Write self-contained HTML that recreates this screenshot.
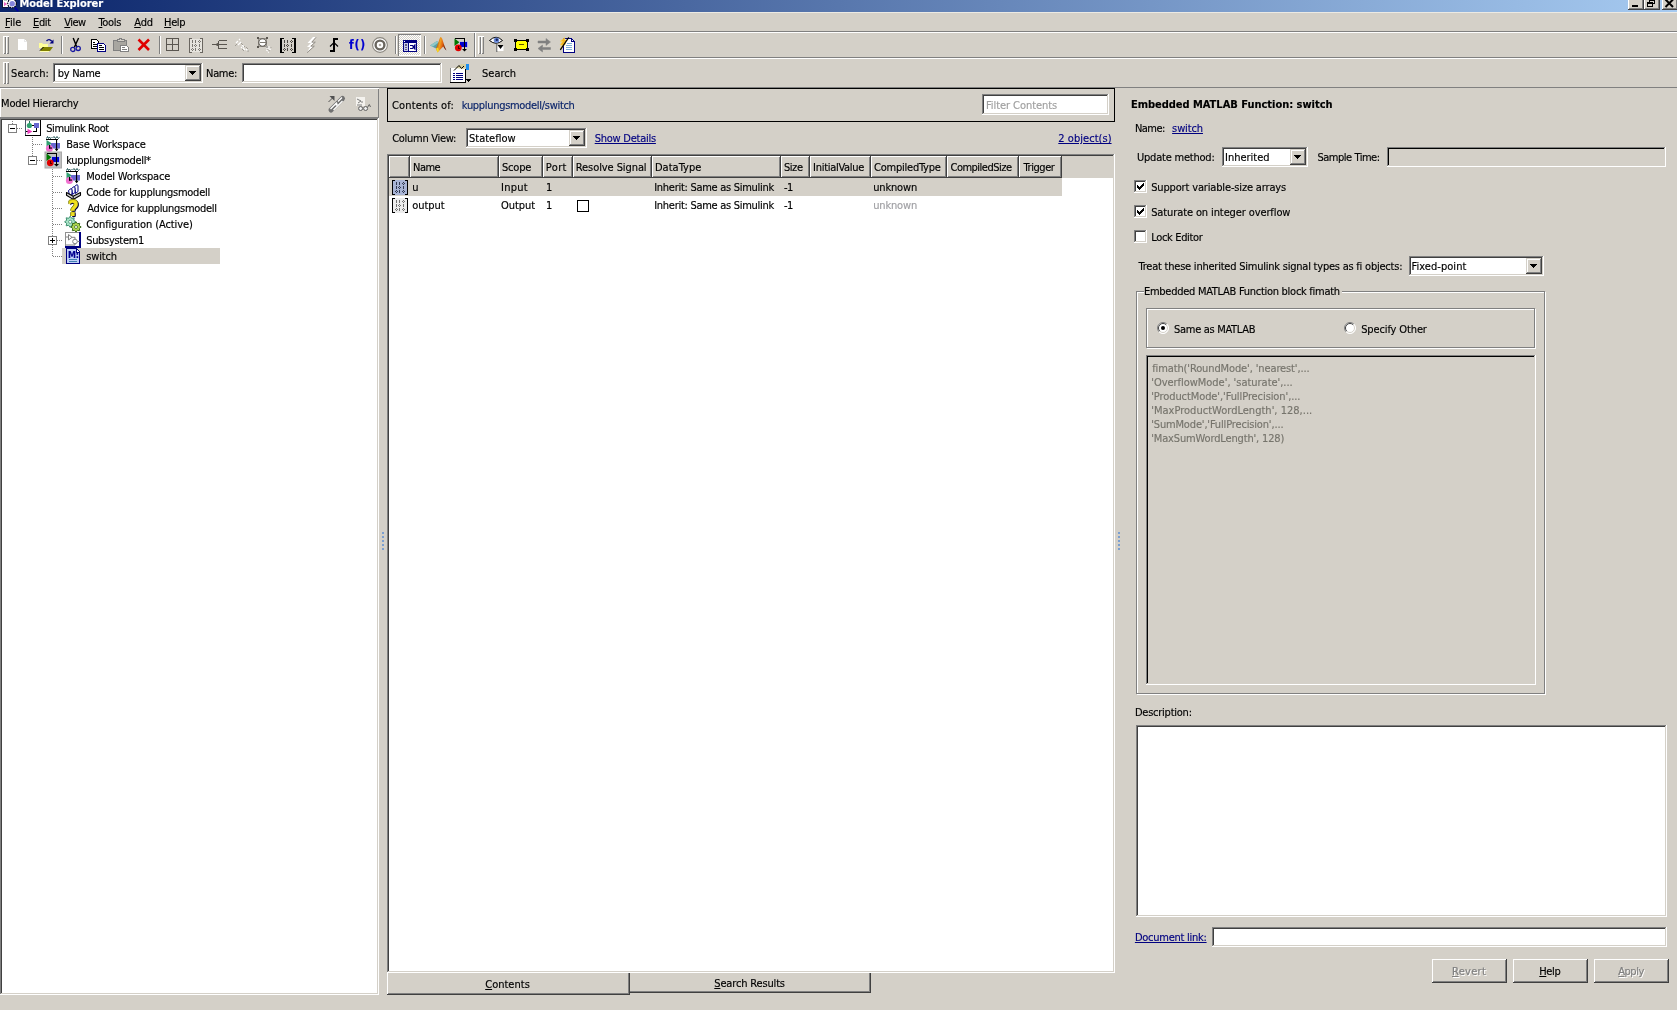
<!DOCTYPE html>
<html><head><meta charset="utf-8"><title>Model Explorer</title><style>
html,body{margin:0;padding:0}
body{width:1677px;height:1010px;overflow:hidden;background:#d4d0c8;position:relative;font:11px/14px "DejaVu Sans Condensed","Liberation Sans",sans-serif;color:#000}
div,span.t,svg{position:absolute;box-sizing:border-box}
.t{white-space:pre;line-height:14px;height:14px;-webkit-text-stroke:0.15px}
u{text-decoration:underline;text-underline-offset:1px;text-decoration-thickness:1px}
.sk{box-shadow:inset -1px -1px 0 #fff,inset 1px 1px 0 #808080,inset -2px -2px 0 #d4d0c8,inset 2px 2px 0 #404040}
.rb{background:#d4d0c8;box-shadow:inset -1px -1px 0 #404040,inset 1px 1px 0 #fff,inset -2px -2px 0 #808080,inset 2px 2px 0 #d4d0c8}
.rs{background:#d4d0c8;box-shadow:inset -1px -1px 0 #404040,inset 1px 1px 0 #d4d0c8,inset -2px -2px 0 #808080,inset 2px 2px 0 #fff}
.skd{box-shadow:inset -1px -1px 0 #fff,inset 1px 1px 0 #808080,inset -2px -2px 0 #d4d0c8,inset 2px 2px 0 #000}
.hc{background:#d4d0c8;box-shadow:inset -1px -1px 0 #404040,inset 1px 1px 0 #fff,inset -2px -2px 0 #808080}
svg{overflow:visible}
#w{left:0;top:0;width:1677px;height:1010px;overflow:hidden;will-change:transform}
</style></head><body><div id="w">
<div style="left:0px;top:0px;width:1677px;height:12px;background:linear-gradient(90deg,#0a246a 0%,#a6caf0 100%)"></div>
<div class="rb" style="left:1628px;top:-4px;width:16px;height:14px;"></div>
<div class="rb" style="left:1644px;top:-4px;width:16px;height:14px;"></div>
<div class="rb" style="left:1662px;top:-4px;width:16px;height:14px;"></div>
<div style="left:1632px;top:5px;width:6px;height:2px;background:#000"></div>
<div style="left:1649px;top:-1px;width:6px;height:5px;border:1px solid #000;border-top-width:2px"></div>
<div style="left:1647px;top:2px;width:6px;height:5px;border:1px solid #000;border-top-width:2px;background:#d4d0c8"></div>
<svg style="left:1665px;top:-1.5px" width="9" height="9" viewBox="0 0 9 9"><path d="M0.5 0.5L8 8M8 0.5L0.5 8" stroke="#000" stroke-width="2"/></svg>
<div style="left:0px;top:12px;width:1677px;height:1px;background:#eceae4"></div>
<div style="left:0px;top:31px;width:1677px;height:1px;background:#808080"></div>
<div style="left:0px;top:32px;width:1677px;height:1px;background:#ffffff"></div>
<div style="left:3px;top:36px;width:3px;height:18px;background:#d4d0c8;box-shadow:inset 1px 1px 0 #fff,inset -1px -1px 0 #808080"></div>
<div style="left:6px;top:36px;width:3px;height:18px;background:#d4d0c8;box-shadow:inset 1px 1px 0 #fff,inset -1px -1px 0 #808080"></div>
<div style="left:61px;top:36px;width:1px;height:18px;background:#808080"></div>
<div style="left:62px;top:36px;width:1px;height:18px;background:#ffffff"></div>
<div style="left:159px;top:36px;width:1px;height:18px;background:#808080"></div>
<div style="left:160px;top:36px;width:1px;height:18px;background:#ffffff"></div>
<div style="left:395px;top:36px;width:1px;height:18px;background:#808080"></div>
<div style="left:396px;top:36px;width:1px;height:18px;background:#ffffff"></div>
<div style="left:424px;top:36px;width:1px;height:18px;background:#808080"></div>
<div style="left:425px;top:36px;width:1px;height:18px;background:#ffffff"></div>
<div style="left:474px;top:33px;width:1px;height:24px;background:#808080"></div>
<div style="left:475px;top:33px;width:1px;height:24px;background:#ffffff"></div>
<div style="left:478px;top:36px;width:3px;height:18px;background:#d4d0c8;box-shadow:inset 1px 1px 0 #fff,inset -1px -1px 0 #808080"></div>
<div style="left:481px;top:36px;width:3px;height:18px;background:#d4d0c8;box-shadow:inset 1px 1px 0 #fff,inset -1px -1px 0 #808080"></div>
<div style="left:0px;top:57px;width:1677px;height:1px;background:#808080"></div>
<div style="left:0px;top:58px;width:1677px;height:1px;background:#ffffff"></div>
<div style="left:398px;top:34px;width:23px;height:22px;background-image:conic-gradient(#fff 25%,#d4d0c8 0 50%,#fff 0 75%,#d4d0c8 0);background-size:2px 2px;box-shadow:inset 1px 1px 0 #808080,inset -1px -1px 0 #fff"></div>
<div style="left:3px;top:62px;width:3px;height:22px;background:#d4d0c8;box-shadow:inset 1px 1px 0 #fff,inset -1px -1px 0 #808080"></div>
<div style="left:6px;top:62px;width:3px;height:22px;background:#d4d0c8;box-shadow:inset 1px 1px 0 #fff,inset -1px -1px 0 #808080"></div>
<div class="sk" style="left:53px;top:63px;width:150px;height:20px;background:#fff"></div>
<div class="rs" style="left:185px;top:65px;width:16px;height:16px;"></div>
<div class="sk" style="left:242px;top:63px;width:200px;height:20px;background:#fff"></div>
<div style="left:0px;top:87px;width:1677px;height:1px;background:#808080"></div>
<svg style="left:189px;top:71px" width="7" height="4" viewBox="0 0 7 4" shape-rendering="crispEdges"><path d="M0 0H7L3.5 3.5Z M0 0h7v1h-7z M1 1h5v1h-5z M2 2h3v1h-3z M3 3h1v1h-1z" fill="#000"/></svg>
<div style="left:0px;top:88px;width:379px;height:1px;background:#ffffff"></div>
<div style="left:0px;top:88px;width:1px;height:30px;background:#ffffff"></div>
<div style="left:378px;top:89px;width:1px;height:29px;background:#808080"></div>
<div style="left:0px;top:117px;width:379px;height:1px;background:#808080"></div>
<div class="sk" style="left:0px;top:118px;width:379px;height:877px;background:#fff"></div>
<div style="left:382px;top:532px;width:2px;height:2px;background:#7b9fd0"></div>
<div style="left:382px;top:536px;width:2px;height:2px;background:#7b9fd0"></div>
<div style="left:382px;top:540px;width:2px;height:2px;background:#7b9fd0"></div>
<div style="left:382px;top:544px;width:2px;height:2px;background:#7b9fd0"></div>
<div style="left:382px;top:548px;width:2px;height:2px;background:#7b9fd0"></div>
<div style="left:1118px;top:532px;width:2px;height:2px;background:#7b9fd0"></div>
<div style="left:1118px;top:536px;width:2px;height:2px;background:#7b9fd0"></div>
<div style="left:1118px;top:540px;width:2px;height:2px;background:#7b9fd0"></div>
<div style="left:1118px;top:544px;width:2px;height:2px;background:#7b9fd0"></div>
<div style="left:1118px;top:548px;width:2px;height:2px;background:#7b9fd0"></div>
<div style="left:387px;top:88px;width:728px;height:34px;border:1px solid #000"></div>
<div class="sk" style="left:982px;top:94px;width:127px;height:21px;background:#fff"></div>
<div class="sk" style="left:466px;top:128px;width:121px;height:20px;background:#fff"></div>
<div class="rs" style="left:569px;top:130px;width:16px;height:16px;"></div>
<svg style="left:573px;top:136px" width="7" height="4" viewBox="0 0 7 4" shape-rendering="crispEdges"><path d="M0 0H7L3.5 3.5Z M0 0h7v1h-7z M1 1h5v1h-5z M2 2h3v1h-3z M3 3h1v1h-1z" fill="#000"/></svg>
<div class="sk" style="left:387px;top:154px;width:728px;height:819px;background:#fff"></div>
<div class="hc" style="left:389px;top:156px;width:21px;height:22px;"></div>
<div class="hc" style="left:410px;top:156px;width:89px;height:22px;"></div>
<div class="hc" style="left:499px;top:156px;width:44px;height:22px;"></div>
<div class="hc" style="left:543px;top:156px;width:30px;height:22px;"></div>
<div class="hc" style="left:573px;top:156px;width:79px;height:22px;"></div>
<div class="hc" style="left:652px;top:156px;width:129px;height:22px;"></div>
<div class="hc" style="left:781px;top:156px;width:29px;height:22px;"></div>
<div class="hc" style="left:810px;top:156px;width:61px;height:22px;"></div>
<div class="hc" style="left:871px;top:156px;width:76px;height:22px;"></div>
<div class="hc" style="left:947px;top:156px;width:72px;height:22px;"></div>
<div class="hc" style="left:1019px;top:156px;width:43px;height:22px;"></div>
<div style="left:1062px;top:156px;width:51px;height:22px;background:#d4d0c8"></div>
<div style="left:389px;top:178px;width:673px;height:18px;background:#d4d0c8"></div>
<div style="left:577px;top:200px;width:12px;height:12px;border:1px solid #000;background:#fff"></div>
<div style="left:387px;top:973px;width:243px;height:22px;background:#d4d0c8;box-shadow:inset -1px -1px 0 #404040,inset 1px 0 0 #fff,inset -2px -2px 0 #808080"></div>
<div style="left:630px;top:973px;width:241px;height:20px;background:#d4d0c8;box-shadow:inset -1px -1px 0 #404040,inset -2px -2px 0 #808080"></div>
<div class="sk" style="left:1222px;top:147px;width:86px;height:20px;background:#fff"></div>
<div class="rs" style="left:1290px;top:149px;width:16px;height:16px;"></div>
<svg style="left:1294px;top:155px" width="7" height="4" viewBox="0 0 7 4" shape-rendering="crispEdges"><path d="M0 0H7L3.5 3.5Z M0 0h7v1h-7z M1 1h5v1h-5z M2 2h3v1h-3z M3 3h1v1h-1z" fill="#000"/></svg>
<div class="skd" style="left:1387px;top:147px;width:279px;height:20px;background:#d4d0c8"></div>
<div class="sk" style="left:1134px;top:180px;width:13px;height:13px;background:#fff"></div>
<svg style="left:1137px;top:183px" width="7" height="7" viewBox="0 0 7 7" shape-rendering="crispEdges"><path d="M0 2v3l2 2 5-5v-3l-5 5z" fill="#000"/></svg>
<div class="sk" style="left:1134px;top:205px;width:13px;height:13px;background:#fff"></div>
<svg style="left:1137px;top:208px" width="7" height="7" viewBox="0 0 7 7" shape-rendering="crispEdges"><path d="M0 2v3l2 2 5-5v-3l-5 5z" fill="#000"/></svg>
<div class="sk" style="left:1134px;top:230px;width:13px;height:13px;background:#fff"></div>
<div class="sk" style="left:1409px;top:256px;width:135px;height:20px;background:#fff"></div>
<div class="rs" style="left:1526px;top:258px;width:16px;height:16px;"></div>
<svg style="left:1530px;top:264px" width="7" height="4" viewBox="0 0 7 4" shape-rendering="crispEdges"><path d="M0 0H7L3.5 3.5Z M0 0h7v1h-7z M1 1h5v1h-5z M2 2h3v1h-3z M3 3h1v1h-1z" fill="#000"/></svg>
<div style="left:1136px;top:291px;width:409px;height:403px;border:1px solid #808080;box-shadow:1px 1px 0 #fff,inset 1px 1px 0 #fff"></div>
<div style="left:1144px;top:284px;width:198px;height:14px;background:#d4d0c8"></div>
<div style="left:1146px;top:308px;width:389px;height:40px;border:1px solid #808080;box-shadow:1px 1px 0 #fff,inset 1px 1px 0 #fff"></div>
<svg style="left:1157px;top:322px" width="12" height="12" viewBox="0 0 12 12"><circle cx="6" cy="6" r="5.5" fill="#fff"/><path d="M9.9 2.1A5.5 5.5 0 0 0 2.1 9.9" fill="none" stroke="#808080"/><path d="M9.2 2.8A4.5 4.5 0 0 0 2.8 9.2" fill="none" stroke="#404040"/><path d="M2.1 9.9A5.5 5.5 0 0 0 9.9 2.1" fill="none" stroke="#fff"/><path d="M2.8 9.2A4.5 4.5 0 0 0 9.2 2.8" fill="none" stroke="#d4d0c8"/><circle cx="6" cy="6" r="2" fill="#000"/></svg>
<svg style="left:1344px;top:322px" width="12" height="12" viewBox="0 0 12 12"><circle cx="6" cy="6" r="5.5" fill="#fff"/><path d="M9.9 2.1A5.5 5.5 0 0 0 2.1 9.9" fill="none" stroke="#808080"/><path d="M9.2 2.8A4.5 4.5 0 0 0 2.8 9.2" fill="none" stroke="#404040"/><path d="M2.1 9.9A5.5 5.5 0 0 0 9.9 2.1" fill="none" stroke="#fff"/><path d="M2.8 9.2A4.5 4.5 0 0 0 9.2 2.8" fill="none" stroke="#d4d0c8"/></svg>
<div class="skd" style="left:1146px;top:355px;width:390px;height:330px;background:#d4d0c8"></div>
<div class="sk" style="left:1136px;top:725px;width:531px;height:192px;background:#fff"></div>
<div class="sk" style="left:1212px;top:927px;width:455px;height:20px;background:#fff"></div>
<div class="rb" style="left:1432px;top:959px;width:75px;height:24px;"></div>
<div class="rb" style="left:1513px;top:959px;width:75px;height:24px;"></div>
<div class="rb" style="left:1594px;top:959px;width:75px;height:24px;"></div>
<span class="t" style="left:19.50px;top:-3px;letter-spacing:-0.046px;font-weight:bold;color:#fff;">Model Explorer</span>
<span class="t" style="left:5.10px;top:16px;letter-spacing:-0.067px;"><u>F</u>ile</span>
<span class="t" style="left:33.00px;top:16px;letter-spacing:-0.367px;"><u>E</u>dit</span>
<span class="t" style="left:64.30px;top:16px;letter-spacing:-0.600px;"><u>V</u>iew</span>
<span class="t" style="left:98.50px;top:16px;letter-spacing:-0.350px;"><u>T</u>ools</span>
<span class="t" style="left:134.20px;top:16px;letter-spacing:-0.150px;"><u>A</u>dd</span>
<span class="t" style="left:164.10px;top:16px;letter-spacing:-0.400px;"><u>H</u>elp</span>
<span class="t" style="left:11.10px;top:67px;letter-spacing:0.067px;">Search:</span>
<span class="t" style="left:57.80px;top:67px;letter-spacing:-0.283px;">by Name</span>
<span class="t" style="left:206.10px;top:67px;letter-spacing:-0.350px;">Name:</span>
<span class="t" style="left:482.10px;top:67px;letter-spacing:-0.020px;">Search</span>
<span class="t" style="left:1.10px;top:97px;letter-spacing:-0.229px;">Model Hierarchy</span>
<span class="t" style="left:392.00px;top:99px;letter-spacing:0.155px;">Contents of:</span>
<span class="t" style="left:461.80px;top:99px;letter-spacing:-0.305px;color:#0a246a;">kupplungsmodell/switch</span>
<span class="t" style="left:986.00px;top:99px;letter-spacing:-0.064px;color:#a0a0a0;">Filter Contents</span>
<span class="t" style="left:392.20px;top:132px;letter-spacing:-0.273px;">Column View:</span>
<span class="t" style="left:469.00px;top:132px;">Stateflow</span>
<span class="t" style="left:594.70px;top:132px;letter-spacing:-0.245px;color:#000080;"><u>Show Details</u></span>
<span class="t" style="left:1058.30px;top:132px;letter-spacing:0.040px;color:#000080;"><u>2 object(s)</u></span>
<span class="t" style="left:413.10px;top:161px;letter-spacing:-0.533px;">Name</span>
<span class="t" style="left:501.90px;top:161px;letter-spacing:-0.175px;">Scope</span>
<span class="t" style="left:545.80px;top:161px;letter-spacing:0.367px;">Port</span>
<span class="t" style="left:575.80px;top:161px;letter-spacing:-0.085px;">Resolve Signal</span>
<span class="t" style="left:654.90px;top:161px;letter-spacing:0.043px;">DataType</span>
<span class="t" style="left:783.90px;top:161px;letter-spacing:-0.400px;">Size</span>
<span class="t" style="left:813.10px;top:161px;letter-spacing:-0.291px;">InitialValue</span>
<span class="t" style="left:874.10px;top:161px;letter-spacing:-0.236px;">CompiledType</span>
<span class="t" style="left:950.50px;top:161px;letter-spacing:-0.509px;">CompiledSize</span>
<span class="t" style="left:1023.50px;top:161px;letter-spacing:-0.433px;">Trigger</span>
<span class="t" style="left:412.30px;top:181px;">u</span>
<span class="t" style="left:501.00px;top:181px;letter-spacing:0.250px;">Input</span>
<span class="t" style="left:546.10px;top:181px;">1</span>
<span class="t" style="left:654.20px;top:181px;letter-spacing:-0.279px;">Inherit: Same as Simulink</span>
<span class="t" style="left:784.10px;top:181px;letter-spacing:-0.600px;">-1</span>
<span class="t" style="left:873.20px;top:181px;letter-spacing:-0.167px;">unknown</span>
<span class="t" style="left:412.30px;top:199px;letter-spacing:-0.080px;">output</span>
<span class="t" style="left:501.00px;top:199px;letter-spacing:-0.040px;">Output</span>
<span class="t" style="left:546.10px;top:199px;">1</span>
<span class="t" style="left:654.20px;top:199px;letter-spacing:-0.279px;">Inherit: Same as Simulink</span>
<span class="t" style="left:784.10px;top:199px;letter-spacing:-0.600px;">-1</span>
<span class="t" style="left:873.20px;top:199px;letter-spacing:-0.167px;color:#a0a0a4;">unknown</span>
<span class="t" style="left:485.20px;top:978px;letter-spacing:0.014px;"><u>C</u>ontents</span>
<span class="t" style="left:714.30px;top:977px;letter-spacing:-0.162px;"><u>S</u>earch Results</span>
<span class="t" style="left:1130.90px;top:98px;letter-spacing:-0.019px;font-weight:bold;">Embedded MATLAB Function: switch</span>
<span class="t" style="left:1134.90px;top:122px;letter-spacing:-0.525px;">Name:</span>
<span class="t" style="left:1172.10px;top:122px;letter-spacing:-0.120px;color:#000080;"><u>switch</u></span>
<span class="t" style="left:1137.00px;top:151px;letter-spacing:-0.215px;">Update method:</span>
<span class="t" style="left:1225.00px;top:151px;letter-spacing:-0.013px;">Inherited</span>
<span class="t" style="left:1317.40px;top:151px;letter-spacing:-0.464px;">Sample Time:</span>
<span class="t" style="left:1151.20px;top:181px;letter-spacing:-0.156px;">Support variable-size arrays</span>
<span class="t" style="left:1151.20px;top:206px;letter-spacing:-0.111px;">Saturate on integer overflow</span>
<span class="t" style="left:1151.20px;top:231px;letter-spacing:-0.330px;">Lock Editor</span>
<span class="t" style="left:1138.50px;top:260px;letter-spacing:-0.225px;">Treat these inherited Simulink signal types as fi objects:</span>
<span class="t" style="left:1411.60px;top:260px;letter-spacing:0.040px;">Fixed-point</span>
<span class="t" style="left:1144.00px;top:285px;letter-spacing:-0.275px;">Embedded MATLAB Function block fimath</span>
<span class="t" style="left:1174.10px;top:323px;letter-spacing:-0.308px;">Same as MATLAB</span>
<span class="t" style="left:1361.20px;top:323px;letter-spacing:-0.125px;">Specify Other</span>
<span class="t" style="left:1152.20px;top:362px;letter-spacing:-0.119px;color:#76746c;">fimath(&#x27;RoundMode&#x27;, &#x27;nearest&#x27;,...</span>
<span class="t" style="left:1151.20px;top:376px;letter-spacing:-0.028px;color:#76746c;">&#x27;OverflowMode&#x27;, &#x27;saturate&#x27;,...</span>
<span class="t" style="left:1151.20px;top:390px;letter-spacing:-0.087px;color:#76746c;">&#x27;ProductMode&#x27;,&#x27;FullPrecision&#x27;,...</span>
<span class="t" style="left:1151.20px;top:404px;letter-spacing:0.013px;color:#76746c;">&#x27;MaxProductWordLength&#x27;, 128,...</span>
<span class="t" style="left:1151.20px;top:418px;letter-spacing:-0.157px;color:#76746c;">&#x27;SumMode&#x27;,&#x27;FullPrecision&#x27;,...</span>
<span class="t" style="left:1151.20px;top:432px;letter-spacing:-0.148px;color:#76746c;">&#x27;MaxSumWordLength&#x27;, 128)</span>
<span class="t" style="left:1134.90px;top:706px;letter-spacing:-0.236px;">Description:</span>
<span class="t" style="left:1134.90px;top:931px;letter-spacing:-0.254px;color:#000080;"><u>Document link:</u></span>
<span class="t" style="left:1452.00px;top:965px;letter-spacing:0.300px;color:#808080;text-shadow:1px 1px 0 #fff;"><u>R</u>evert</span>
<span class="t" style="left:1539.30px;top:965px;letter-spacing:-0.400px;"><u>H</u>elp</span>
<span class="t" style="left:1618.20px;top:965px;letter-spacing:-0.450px;color:#808080;text-shadow:1px 1px 0 #fff;"><u>A</u>pply</span>
<div style="left:62px;top:248px;width:158px;height:16px;background:#d4d0c8"></div>
<div style="left:17px;top:128px;width:5px;height:1px;background-image:linear-gradient(90deg,#808080 50%,transparent 0);background-size:2px 1px;background-position:0px 0"></div>
<div style="left:8px;top:124px;width:9px;height:9px;border:1px solid #808080;background:#fff"></div>
<div style="left:10px;top:128px;width:5px;height:1px;background:#000"></div>
<div style="left:33px;top:144px;width:9px;height:1px;background-image:linear-gradient(90deg,#808080 50%,transparent 0);background-size:2px 1px;background-position:0px 0"></div>
<div style="left:37px;top:160px;width:5px;height:1px;background-image:linear-gradient(90deg,#808080 50%,transparent 0);background-size:2px 1px;background-position:0px 0"></div>
<div style="left:28px;top:156px;width:9px;height:9px;border:1px solid #808080;background:#fff"></div>
<div style="left:30px;top:160px;width:5px;height:1px;background:#000"></div>
<div style="left:53px;top:176px;width:9px;height:1px;background-image:linear-gradient(90deg,#808080 50%,transparent 0);background-size:2px 1px;background-position:0px 0"></div>
<div style="left:53px;top:192px;width:9px;height:1px;background-image:linear-gradient(90deg,#808080 50%,transparent 0);background-size:2px 1px;background-position:0px 0"></div>
<div style="left:53px;top:208px;width:9px;height:1px;background-image:linear-gradient(90deg,#808080 50%,transparent 0);background-size:2px 1px;background-position:0px 0"></div>
<div style="left:53px;top:224px;width:9px;height:1px;background-image:linear-gradient(90deg,#808080 50%,transparent 0);background-size:2px 1px;background-position:0px 0"></div>
<div style="left:57px;top:240px;width:5px;height:1px;background-image:linear-gradient(90deg,#808080 50%,transparent 0);background-size:2px 1px;background-position:0px 0"></div>
<div style="left:48px;top:236px;width:9px;height:9px;border:1px solid #808080;background:#fff"></div>
<div style="left:50px;top:240px;width:5px;height:1px;background:#000"></div>
<div style="left:52px;top:238px;width:1px;height:5px;background:#000"></div>
<div style="left:53px;top:256px;width:9px;height:1px;background-image:linear-gradient(90deg,#808080 50%,transparent 0);background-size:2px 1px;background-position:0px 0"></div>
<div style="left:12px;top:121px;width:1px;height:3px;background-image:linear-gradient(#808080 50%,transparent 0);background-size:1px 2px;background-position:0 0px"></div>
<div style="left:32px;top:136px;width:1px;height:20px;background-image:linear-gradient(#808080 50%,transparent 0);background-size:1px 2px;background-position:0 1px"></div>
<div style="left:52px;top:168px;width:1px;height:68px;background-image:linear-gradient(#808080 50%,transparent 0);background-size:1px 2px;background-position:0 1px"></div>
<div style="left:52px;top:245px;width:1px;height:12px;background-image:linear-gradient(#808080 50%,transparent 0);background-size:1px 2px;background-position:0 0px"></div>
<svg style="left:2px;top:-6px" width="18" height="18" viewBox="0 0 18 18"><rect x="0" y="0" width="1" height="14" fill="#101838"/><rect x="0" y="13" width="6" height="1" fill="#101838"/><rect x="1" y="0" width="5" height="13" fill="#fff"/><rect x="2" y="5" width="3" height="1.6" fill="#80b090"/><path d="M2 8v4.2l3.2-2.1z" fill="#e868c0"/><circle cx="10" cy="9.5" r="4.3" fill="#fff" stroke="#000018" stroke-width="1.1" stroke-dasharray="1.6 0.9"/><circle cx="10.2" cy="9.8" r="2.7" fill="#8484dc"/><path d="M12.8 13.6L16.2 17.2" stroke="#0000a0" stroke-width="1.8"/></svg>
<svg style="left:18px;top:39px" width="9" height="11" viewBox="0 0 9 11" shape-rendering="crispEdges"><path d="M0 0h6l3 3v8h-9z" fill="#fff"/><path d="M6 0v3h3z" fill="#e8e8e8"/><rect x="7" y="1" width="1" height="1" fill="#fff"/></svg>
<svg style="left:38px;top:38px" width="16" height="14" viewBox="0 0 16 14"><path d="M1 5h3l1 1h5v4h-9z" fill="#ffff99"/><path d="M5 9h10l-3 4h-10z" fill="#808000"/><path d="M2 12.5L5.5 9" stroke="#000" stroke-width="1" fill="none"/><path d="M2 13.5h9" stroke="#ffffb0" stroke-width="1"/><path d="M8.5 3Q11 0 13.8 3.2" stroke="#000080" stroke-width="1.3" fill="none"/><path d="M15.5 1.5v4h-4z" fill="#000080"/></svg>
<svg style="left:70px;top:38px" width="11" height="14" viewBox="0 0 11 14"><path d="M3.2 0L7 9.5M8.6 0L4.2 9.5" stroke="#000" stroke-width="1.4" fill="none"/><circle cx="2.8" cy="11.4" r="2.1" fill="none" stroke="#1818a0" stroke-width="1.3"/><circle cx="8.2" cy="10.4" r="2.1" fill="none" stroke="#1818a0" stroke-width="1.3"/></svg>
<svg style="left:90px;top:39px" width="17" height="13" viewBox="0 0 17 13" shape-rendering="crispEdges"><path d="M1.5 0.5h5l2 2v7h-7z" fill="#fff" stroke="#000"/><rect x="3" y="3" width="2" height="1" fill="#000"/><rect x="3" y="5" width="4" height="1" fill="#000"/><rect x="3" y="7" width="4" height="1" fill="#000"/><path d="M7.5 4.5h6l2 2v6h-8z" fill="#fff" stroke="#000080"/><rect x="9" y="6" width="3" height="1" fill="#000"/><rect x="9" y="8" width="5" height="1" fill="#000"/><rect x="9" y="10" width="5" height="1" fill="#000"/></svg>
<svg style="left:113px;top:38px" width="16" height="14" viewBox="0 0 16 14" shape-rendering="crispEdges"><path d="M0.5 2.5h13v10h-13z" fill="#a8a6a0" stroke="#808080"/><path d="M4 3.5v-2h2l1-1h1l1 1h2v2z" fill="#d4d0c8" stroke="#808080"/><path d="M7.5 7.5h6l2 2v4h-8z" fill="#fff" stroke="#808080"/><rect x="9" y="9" width="3" height="1" fill="#808080"/><rect x="9" y="11" width="5" height="1" fill="#808080"/></svg>
<svg style="left:137px;top:38px" width="14" height="14" viewBox="0 0 14 14"><path d="M1.5 1.5L12 12M12 1.5L1.5 12" stroke="#e00000" stroke-width="2.6" fill="none"/></svg>
<svg style="left:166px;top:38px" width="13" height="13" viewBox="0 0 13 13" shape-rendering="crispEdges"><path d="M0.5 0.5h12v12h-12zM6.5 0.5v12M0.5 6.5h12" fill="none" stroke="#5a5650"/></svg>
<svg style="left:189px;top:38px" width="14" height="15" viewBox="0 0 14 15" shape-rendering="crispEdges"><rect x="1" y="1" width="12" height="13" fill="#e6e4de"/><rect x="0" y="0" width="1" height="15" fill="#6a6660"/><rect x="0" y="0" width="3" height="1" fill="#6a6660"/><rect x="0" y="14" width="3" height="1" fill="#6a6660"/><rect x="13" y="0" width="1" height="15" fill="#6a6660"/><rect x="11" y="0" width="3" height="1" fill="#6a6660"/><rect x="11" y="14" width="3" height="1" fill="#6a6660"/><rect x="3" y="2" width="1" height="3" fill="#7a7670"/><rect x="3" y="6" width="1" height="3" fill="#7a7670"/><rect x="3" y="10" width="1" height="1" fill="#7a7670"/><rect x="3" y="12" width="1" height="1" fill="#7a7670"/><rect x="2" y="11" width="1" height="1" fill="#7a7670"/><rect x="4" y="11" width="1" height="1" fill="#7a7670"/><rect x="6" y="2" width="1" height="3" fill="#7a7670"/><rect x="6" y="6" width="1" height="1" fill="#7a7670"/><rect x="6" y="8" width="1" height="1" fill="#7a7670"/><rect x="5" y="7" width="1" height="1" fill="#7a7670"/><rect x="7" y="7" width="1" height="1" fill="#7a7670"/><rect x="6" y="10" width="1" height="3" fill="#7a7670"/><rect x="10" y="2" width="1" height="1" fill="#7a7670"/><rect x="10" y="4" width="1" height="1" fill="#7a7670"/><rect x="9" y="3" width="1" height="1" fill="#7a7670"/><rect x="11" y="3" width="1" height="1" fill="#7a7670"/><rect x="10" y="6" width="1" height="3" fill="#7a7670"/><rect x="10" y="10" width="1" height="1" fill="#7a7670"/><rect x="10" y="12" width="1" height="1" fill="#7a7670"/><rect x="9" y="11" width="1" height="1" fill="#7a7670"/><rect x="11" y="11" width="1" height="1" fill="#7a7670"/></svg>
<svg style="left:212px;top:40px" width="15" height="9" viewBox="0 0 15 9" shape-rendering="crispEdges"><path d="M0 4.5h6M6.5 0.5v8M6.5 0.5h8M6.5 4.5h8M6.5 8.5h8" fill="none" stroke="#5a5650"/><circle cx="5.7" cy="4.5" r="1.6" fill="#5a5650" shape-rendering="auto"/></svg>
<svg style="left:234px;top:37px" width="16" height="16" viewBox="0 0 16 16"><path d="M2 6l2-2M5 3l1-1M4 8l3-3M8 8l2 2M9 11l2 2M12 12l2 2M7 10l1 1" stroke="#fff" stroke-width="1.2"/><path d="M1 9l2-2M7 6l2 2M10 9l1 1M8 12l2 2M12 10l2 2M13 14h2" stroke="#a09c94" stroke-width="1"/></svg>
<svg style="left:256px;top:37px" width="17" height="16" viewBox="0 0 17 16"><path d="M2.5 1.5H10.5V9.5H2.5Z" fill="none" stroke="#9a968e" shape-rendering="crispEdges"/><rect x="1" y="0" width="2" height="2" fill="#5a5650"/><rect x="10" y="0" width="2" height="2" fill="#5a5650"/><rect x="1" y="9" width="2" height="2" fill="#5a5650"/><rect x="10" y="9" width="2" height="2" fill="#5a5650"/><circle cx="6.5" cy="5.5" r="3.7" fill="#fff" stroke="#5a5650" stroke-width="1.1" shape-rendering="auto"/><rect x="4" y="5" width="6" height="1" fill="#807c74"/><path d="M11 9v3h2v-3M10 13l2 1M13 13l2-1M12 15l1 .5" stroke="#fff" stroke-width="1" fill="none"/><path d="M11 12l3 2M15 10v1" stroke="#a09c94" stroke-width=".8" fill="none"/></svg>
<svg style="left:280px;top:38px" width="16" height="15" viewBox="0 0 16 15" shape-rendering="crispEdges"><rect x="0" y="0" width="2" height="15" fill="#000"/><rect x="0" y="0" width="4" height="1" fill="#000"/><rect x="0" y="14" width="4" height="1" fill="#000"/><rect x="14" y="0" width="2" height="15" fill="#000"/><rect x="12" y="0" width="4" height="1" fill="#000"/><rect x="12" y="14" width="4" height="1" fill="#000"/><rect x="4" y="2" width="1" height="3" fill="#4a4640"/><rect x="4" y="6" width="1" height="3" fill="#4a4640"/><rect x="4" y="10" width="1" height="1" fill="#4a4640"/><rect x="4" y="12" width="1" height="1" fill="#4a4640"/><rect x="3" y="11" width="1" height="1" fill="#4a4640"/><rect x="5" y="11" width="1" height="1" fill="#4a4640"/><rect x="7" y="2" width="1" height="3" fill="#4a4640"/><rect x="7" y="6" width="1" height="1" fill="#4a4640"/><rect x="7" y="8" width="1" height="1" fill="#4a4640"/><rect x="6" y="7" width="1" height="1" fill="#4a4640"/><rect x="8" y="7" width="1" height="1" fill="#4a4640"/><rect x="7" y="10" width="1" height="3" fill="#4a4640"/><rect x="11" y="2" width="1" height="1" fill="#4a4640"/><rect x="11" y="4" width="1" height="1" fill="#4a4640"/><rect x="10" y="3" width="1" height="1" fill="#4a4640"/><rect x="12" y="3" width="1" height="1" fill="#4a4640"/><rect x="11" y="6" width="1" height="3" fill="#4a4640"/><rect x="11" y="10" width="1" height="1" fill="#4a4640"/><rect x="11" y="12" width="1" height="1" fill="#4a4640"/><rect x="10" y="11" width="1" height="1" fill="#4a4640"/><rect x="12" y="11" width="1" height="1" fill="#4a4640"/></svg>
<svg style="left:306px;top:37px" width="11" height="16" viewBox="0 0 11 16"><path d="M7 0h3L5.5 5H9L4.5 9H8L1 15.5L4 10H1L5 6H1.5z" fill="#fff"/><path d="M10 0.3L5.8 5.2H9.3L4.8 9.2H8.3L1 15.7" stroke="#8a867e" stroke-width=".9" fill="none"/></svg>
<svg style="left:329px;top:38px" width="10" height="14" viewBox="0 0 10 14" shape-rendering="crispEdges"><rect x="4" y="0" width="5" height="2" fill="#000"/><rect x="4" y="0" width="2" height="14" fill="#000"/><rect x="1" y="12" width="5" height="2" fill="#000"/><path d="M1 8.5L5 4.5L9 8.5" stroke="#000" stroke-width="1.1" fill="none" shape-rendering="auto"/></svg>
<span class="t" style="left:349px;top:37px;font:bold 12px/16px 'DejaVu Sans Condensed','Liberation Sans',sans-serif;color:#0000d0;letter-spacing:0.8px;height:16px">f()</span>
<svg style="left:372px;top:37px" width="16" height="16" viewBox="0 0 16 16"><circle cx="8" cy="8" r="7.4" fill="#fff" stroke="#8a867e" stroke-width="1.1"/><circle cx="8" cy="8" r="4.4" fill="#fff" stroke="#6a665e" stroke-width="2.4"/><circle cx="8" cy="8" r="1.3" fill="#b0aca4"/></svg>
<svg style="left:403px;top:40px" width="14" height="12" viewBox="0 0 14 12" shape-rendering="crispEdges"><rect x="0" y="0" width="14" height="12" fill="#000080"/><rect x="1" y="3" width="12" height="8" fill="#fff"/><rect x="1" y="1" width="1" height="1" fill="#fff"/><rect x="1" y="3" width="4" height="8" fill="#c8c8e8"/><rect x="5" y="3" width="1" height="8" fill="#000080"/><rect x="2" y="4" width="2" height="2" fill="#606080"/><rect x="2" y="7" width="2" height="1" fill="#606080"/><rect x="2" y="9" width="2" height="1" fill="#606080"/><rect x="7" y="5" width="3" height="1" fill="#000080"/><rect x="7" y="8" width="3" height="1" fill="#000080"/><path d="M12.5 3.5v7L9 7z" fill="#000080" shape-rendering="auto"/></svg>
<svg style="left:430px;top:37px" width="17" height="16" viewBox="0 0 17 16"><defs><linearGradient id="mg" x1="0" y1="0" x2="1" y2="0.3"><stop offset="0" stop-color="#802000"/><stop offset=".45" stop-color="#f0a020"/><stop offset=".7" stop-color="#e06010"/><stop offset="1" stop-color="#601000"/></linearGradient></defs><path d="M0 8.5L7 4L10.5 7.5L6 11.5Z" fill="#5aa0a8"/><path d="M0 8.5L7 4L8.5 5.5L3 9.5Z" fill="#90c8c8"/><path d="M6 11.5L8.5 5Q10 0 10.8 0Q12 0 13.5 6Q15 11 16.5 13.5Q14.5 12 13.2 9.5L7.5 15.5Z" fill="url(#mg)"/><path d="M7.5 15.5L6 11.5L8 10.5L9 13.8Z" fill="#f8d820"/></svg>
<svg style="left:454px;top:37px" width="16" height="16" viewBox="0 0 16 16"><path d="M0.5 1.5v7.5l5-3.7z" fill="#007800"/><rect x="5.5" y="4.5" width="8.5" height="6" fill="#b0b0f0"/><rect x="6" y="5" width="7" height="5" fill="#0000d0"/><circle cx="4.3" cy="10.8" r="3.4" fill="#e00000" shape-rendering="auto"/><rect x="1" y="1" width="10" height="1" fill="#000"/><rect x="10" y="1" width="1" height="13" fill="#000"/><path d="M8 12h5l-2.5 2.6z" fill="#000"/><rect x="4" y="9" width="1" height="3" fill="#500000"/><rect x="4" y="11" width="2" height="1" fill="#500000"/></svg>
<svg style="left:489px;top:36px" width="16" height="16" viewBox="0 0 16 16"><path d="M0.5 4.5Q7 -2 13.5 4.5Q7 10 0.5 4.5Z" fill="#fff" stroke="#000" stroke-width="1"/><circle cx="7.5" cy="4.3" r="2.7" fill="#6a8ad8"/><circle cx="7.8" cy="3.8" r="1.2" fill="#102060"/><rect x="7" y="8" width="1.5" height="8" fill="#808080"/><rect x="8.5" y="9" width="6" height="6" fill="#fff"/><path d="M8.5 9h6l-3 4z" fill="#000"/></svg>
<svg style="left:514px;top:39px" width="15" height="12" viewBox="0 0 15 12" shape-rendering="crispEdges"><rect x="2" y="2" width="11" height="8" fill="#ffff00"/><path d="M1.5 1.5h12v9h-12z" fill="none" stroke="#000"/><rect x="0" y="0" width="3" height="3" fill="#000"/><rect x="12" y="0" width="3" height="3" fill="#000"/><rect x="0" y="9" width="3" height="3" fill="#000"/><rect x="12" y="9" width="3" height="3" fill="#000"/><rect x="5" y="5" width="5" height="1" fill="#605800"/></svg>
<svg style="left:538px;top:38px" width="13" height="14" viewBox="0 0 13 14"><path d="M0 3h8V0.5L12.5 4L8 7.5V5H0z" fill="#808080" stroke="#808080" stroke-width=".5"/><path d="M12.5 9.5h-8V7L0 10.5L4.5 14V11.5h8z" fill="#808080" stroke="#808080" stroke-width=".5"/></svg>
<svg style="left:560px;top:37px" width="15" height="16" viewBox="0 0 15 16" shape-rendering="crispEdges"><path d="M3.5 1.5h8l3 3v10.5h-11z" fill="#fff" stroke="#000080"/><path d="M11.5 1.5v3h3" fill="none" stroke="#000080"/><path d="M7 6.5h5M6 8.5h6M6 10.5h6M6 12.5h6" stroke="#80b0d8"/><path d="M4.5 0.5L0 4.5h2.5L0 8h2.5L0 12L6 6.5H3.8L7.5 3H5z" fill="#f4b820" stroke="#f8d860" stroke-width=".6" shape-rendering="auto"/><path d="M8.8 0.3L0.3 12.8" stroke="#000" stroke-width="1.2" shape-rendering="auto"/></svg>
<svg style="left:450px;top:64px" width="21" height="19" viewBox="0 0 21 19" shape-rendering="crispEdges"><rect x="0" y="4" width="15" height="15" fill="#fff"/><rect x="0" y="4" width="1" height="15" fill="#808080"/><rect x="0" y="18" width="16" height="1" fill="#000"/><rect x="15" y="5" width="1" height="14" fill="#000"/><rect x="3" y="9" width="2" height="1" fill="#000080"/><rect x="6" y="9" width="7" height="1" fill="#000080"/><rect x="3" y="11" width="2" height="1" fill="#000080"/><rect x="6" y="11" width="7" height="1" fill="#000080"/><rect x="3" y="13" width="2" height="1" fill="#000080"/><rect x="6" y="13" width="7" height="1" fill="#000080"/><rect x="3" y="15" width="2" height="1" fill="#000080"/><rect x="6" y="15" width="7" height="1" fill="#000080"/><path d="M5 4L11 0h6v3l-3 2z" fill="#d8d0a0" shape-rendering="auto"/><path d="M4 6.5L9 1.5L11.5 4.5L14 2" stroke="#000" fill="none" shape-rendering="auto"/><rect x="16" y="0" width="3" height="6" fill="#2090f0"/><path d="M16 15h5l-2.5 3z" fill="#000"/></svg>
<svg style="left:328px;top:95px" width="17" height="17" viewBox="0 0 17 17"><path d="M1.5 1h5v5z" fill="#505050"/><path d="M0.5 7L5 2.5" stroke="#505050" stroke-width="1"/><path d="M3 15L14.5 3.5" stroke="#707070" stroke-width="5" stroke-linecap="round"/><path d="M2.5 14L9 7.5M10 6.5L14 2.5" stroke="#fff" stroke-width="1.3"/><path d="M5.5 15L14.5 6" stroke="#fff" stroke-width="1.3"/><circle cx="8.5" cy="9.5" r="1.2" fill="#fff"/></svg>
<svg style="left:355px;top:96px" width="17" height="16" viewBox="0 0 17 16"><rect x="1" y="1" width="9" height="9" fill="#f4f2ee"/><path d="M2 3l4 2l-3 2M2 9h5M6 6h2" stroke="#707070" stroke-width=".9" fill="none"/><circle cx="5.6" cy="12.5" r="2" fill="#f0f0f0" stroke="#606060"/><circle cx="10.6" cy="12.5" r="2" fill="#f0f0f0" stroke="#606060"/><path d="M12.4 11.5L14.3 8.5L15.5 11" stroke="#606060" fill="none"/></svg>
<svg style="left:25px;top:120px" width="16" height="16" viewBox="0 0 16 16" shape-rendering="crispEdges"><rect x="0" y="0" width="16" height="16" fill="#fff"/><rect x="0" y="0" width="16" height="1" fill="#c0c0c0"/><rect x="0" y="0" width="1" height="16" fill="#4a5468"/><rect x="15" y="0" width="1" height="16" fill="#000"/><rect x="0" y="15" width="16" height="1" fill="#000"/><rect x="4" y="1" width="1" height="3" fill="#207050"/><circle cx="4.4" cy="5.5" r="2.6" fill="#30a070" shape-rendering="auto"/><rect x="7" y="5" width="2" height="1" fill="#000"/><rect x="9" y="3" width="5" height="5" fill="#6868d0"/><rect x="1" y="11" width="2" height="1" fill="#000"/><path d="M2.5 8.8v5.4l5-2.7z" fill="#f040c0" shape-rendering="auto"/><rect x="8" y="11" width="4" height="1" fill="#000"/><rect x="11" y="8" width="1" height="4" fill="#000"/></svg>
<svg style="left:46px;top:136px" width="16" height="16" viewBox="0 0 16 16"><path d="M0.5 2.5l1-2l1 2l1-1.5l1 1.5l1-1M6.5 2l1.5-1.5l1.5 2l1.5-2l1.5 2l1-1" stroke="#1c5050" stroke-width="1" fill="none"/><path d="M0.5 4v7l5.5-3.5z" fill="#30a070"/><path d="M5 7h9v5.5h-9z" fill="#6868d0"/><circle cx="3.4" cy="12.6" r="3.5" fill="#f070d0"/><rect x="0" y="3" width="12" height="1" fill="#000"/><rect x="10" y="3" width="1.1" height="10.5" fill="#000"/><path d="M8.6 12.8h4L10.6 15.3z" fill="#000"/><rect x="3" y="9" width="1.2" height="3.5" fill="#000"/><rect x="3" y="11.5" width="3" height="1.1" fill="#000"/></svg>
<svg style="left:46px;top:152px" width="16" height="16" viewBox="0 0 16 16"><rect x="-1" y="0" width="16.5" height="16" fill="#c0c0c0" stroke="#a8a8a8" stroke-width="1"/><path d="M0.5 1.5v7.5l5-3.7z" fill="#007800"/><rect x="5.5" y="4.5" width="8.5" height="6" fill="#b0b0f0"/><rect x="6" y="5" width="7" height="5" fill="#0000d0"/><circle cx="4.3" cy="10.8" r="3.4" fill="#e00000" shape-rendering="auto"/><rect x="1" y="1" width="10" height="1" fill="#000"/><rect x="10" y="1" width="1" height="13" fill="#000"/><path d="M8 12h5l-2.5 2.6z" fill="#000"/><rect x="4" y="9" width="1" height="3" fill="#500000"/><rect x="4" y="11" width="2" height="1" fill="#500000"/></svg>
<svg style="left:66px;top:168px" width="16" height="16" viewBox="0 0 16 16"><path d="M0.5 2.5l1-2l1 2l1-1.5l1 1.5l1-1M6.5 2l1.5-1.5l1.5 2l1.5-2l1.5 2l1-1" stroke="#1c5050" stroke-width="1" fill="none"/><path d="M0.5 4v7l5.5-3.5z" fill="#30a070"/><path d="M5 7h9v5.5h-9z" fill="#6868d0"/><circle cx="3.4" cy="12.6" r="3.5" fill="#f070d0"/><rect x="0" y="3" width="12" height="1" fill="#000"/><rect x="10" y="3" width="1.1" height="10.5" fill="#000"/><path d="M8.6 12.8h4L10.6 15.3z" fill="#000"/><rect x="3" y="9" width="1.2" height="3.5" fill="#000"/><rect x="3" y="11.5" width="3" height="1.1" fill="#000"/></svg>
<svg style="left:66px;top:184px" width="16" height="16" viewBox="0 0 16 16"><path d="M8.5 2.5L11 0.6L12 1.5V7.5L9.5 9.5Z" fill="#fff" stroke="#000080" stroke-width="1"/><path d="M5.5 4.5L8 2.6L9 3.5V8.5L6.5 10.5Z" fill="#fff" stroke="#000080" stroke-width="1"/><path d="M2.5 6.5L5 4.6L6 5.5V10L3.5 11.5Z" fill="#fff" stroke="#000080" stroke-width="1"/><path d="M0.5 8.5V11.2L7.2 15.4L14.5 11.2V8.5L7.2 12.3Z" fill="#cfcfcf" stroke="#000" stroke-width="1.1" stroke-linejoin="round"/><path d="M7.2 12.3v3" stroke="#000"/></svg>
<span class="t" style="left:68px;top:198px;font:bold 21px/22px 'DejaVu Sans Condensed','Liberation Sans',sans-serif;color:#f0e020;height:22px;text-shadow:1px 1px 0 #000040,-1px 0 0 #808000,0 -1px 0 #808000,1px 0 0 #202020">?</span>
<svg style="left:64px;top:215px" width="18" height="18" viewBox="0 0 18 18"><polygon points="11.8,6.8 9.7,8.3 10.2,10.8 7.7,10.3 6.2,12.4 4.7,10.3 2.2,10.8 2.7,8.3 0.6,6.8 2.7,5.3 2.2,2.8 4.7,3.3 6.2,1.2 7.7,3.3 10.2,2.8 9.7,5.3" fill="#a8e4c8" stroke="#409070" stroke-width="1" stroke-linejoin="round"/><circle cx="6.2" cy="6.8" r="1.6" fill="#fff" stroke="#409070" stroke-width=".8"/><polygon points="17.2,12.0 15.3,13.4 15.7,15.7 13.4,15.3 12.0,17.2 10.6,15.3 8.3,15.7 8.7,13.4 6.8,12.0 8.7,10.6 8.3,8.3 10.6,8.7 12.0,6.8 13.4,8.7 15.7,8.3 15.3,10.6" fill="#b0d850" stroke="#407020" stroke-width="1" stroke-linejoin="round"/><circle cx="12" cy="12" r="1.5" fill="#fff" stroke="#407020" stroke-width=".8"/></svg>
<svg style="left:65px;top:232px" width="16" height="16" viewBox="0 0 16 16" shape-rendering="crispEdges"><rect x="0" y="0" width="16" height="16" fill="#fff"/><rect x="0" y="0" width="16" height="1" fill="#909090"/><rect x="0" y="0" width="1" height="16" fill="#909090"/><rect x="14" y="0" width="2" height="16" fill="#000080"/><rect x="0" y="14" width="16" height="2" fill="#000080"/><path d="M1 5h2M3.5 2.5v5.5l3.5-2.7zM7 5.3h3v2M12.5 9.5h2M1 13h9v-1.5" fill="none" stroke="#808080" shape-rendering="auto"/><circle cx="10" cy="9.5" r="2.3" fill="#fff" stroke="#808080" shape-rendering="auto"/></svg>
<svg style="left:66px;top:248px" width="14" height="16" viewBox="0 0 14 16" shape-rendering="crispEdges"><path d="M0.5 0.5h9.5l3.5 3.5v11.5h-13z" fill="#c0d0f8" stroke="#000080"/><path d="M10 0.5v3.5h3.5" fill="#fff" stroke="#000080"/><path d="M3 11.5h8M3 13.5h8" stroke="#4080b0"/></svg>
<span class="t" style="left:68px;top:249.5px;font:bold 8px/12px 'DejaVu Sans','Liberation Sans',sans-serif;color:#000090;height:12px;letter-spacing:-0.3px">M:</span>
<svg style="left:392px;top:180px" width="16" height="15" viewBox="0 0 16 15" shape-rendering="crispEdges"><rect x="1" y="0" width="14" height="15" fill="#a8b4d4"/><rect x="0" y="0" width="1" height="15" fill="#000"/><rect x="0" y="0" width="3" height="1" fill="#000"/><rect x="0" y="14" width="3" height="1" fill="#000"/><rect x="15" y="0" width="1" height="15" fill="#000"/><rect x="13" y="0" width="3" height="1" fill="#000"/><rect x="13" y="14" width="3" height="1" fill="#000"/><rect x="4" y="2" width="1" height="3" fill="#303850"/><rect x="4" y="6" width="1" height="3" fill="#303850"/><rect x="4" y="10" width="1" height="1" fill="#303850"/><rect x="4" y="12" width="1" height="1" fill="#303850"/><rect x="3" y="11" width="1" height="1" fill="#303850"/><rect x="5" y="11" width="1" height="1" fill="#303850"/><rect x="7" y="2" width="1" height="3" fill="#303850"/><rect x="7" y="6" width="1" height="1" fill="#303850"/><rect x="7" y="8" width="1" height="1" fill="#303850"/><rect x="6" y="7" width="1" height="1" fill="#303850"/><rect x="8" y="7" width="1" height="1" fill="#303850"/><rect x="7" y="10" width="1" height="3" fill="#303850"/><rect x="11" y="2" width="1" height="1" fill="#303850"/><rect x="11" y="4" width="1" height="1" fill="#303850"/><rect x="10" y="3" width="1" height="1" fill="#303850"/><rect x="12" y="3" width="1" height="1" fill="#303850"/><rect x="11" y="6" width="1" height="3" fill="#303850"/><rect x="11" y="10" width="1" height="1" fill="#303850"/><rect x="11" y="12" width="1" height="1" fill="#303850"/><rect x="10" y="11" width="1" height="1" fill="#303850"/><rect x="12" y="11" width="1" height="1" fill="#303850"/></svg>
<svg style="left:392px;top:198px" width="16" height="15" viewBox="0 0 16 15" shape-rendering="crispEdges"><rect x="1" y="0" width="14" height="15" fill="#ececec"/><rect x="0" y="0" width="1" height="15" fill="#000"/><rect x="0" y="0" width="3" height="1" fill="#000"/><rect x="0" y="14" width="3" height="1" fill="#000"/><rect x="15" y="0" width="1" height="15" fill="#000"/><rect x="13" y="0" width="3" height="1" fill="#000"/><rect x="13" y="14" width="3" height="1" fill="#000"/><rect x="4" y="2" width="1" height="3" fill="#707070"/><rect x="4" y="6" width="1" height="3" fill="#707070"/><rect x="4" y="10" width="1" height="1" fill="#707070"/><rect x="4" y="12" width="1" height="1" fill="#707070"/><rect x="3" y="11" width="1" height="1" fill="#707070"/><rect x="5" y="11" width="1" height="1" fill="#707070"/><rect x="7" y="2" width="1" height="3" fill="#707070"/><rect x="7" y="6" width="1" height="1" fill="#707070"/><rect x="7" y="8" width="1" height="1" fill="#707070"/><rect x="6" y="7" width="1" height="1" fill="#707070"/><rect x="8" y="7" width="1" height="1" fill="#707070"/><rect x="7" y="10" width="1" height="3" fill="#707070"/><rect x="11" y="2" width="1" height="1" fill="#707070"/><rect x="11" y="4" width="1" height="1" fill="#707070"/><rect x="10" y="3" width="1" height="1" fill="#707070"/><rect x="12" y="3" width="1" height="1" fill="#707070"/><rect x="11" y="6" width="1" height="3" fill="#707070"/><rect x="11" y="10" width="1" height="1" fill="#707070"/><rect x="11" y="12" width="1" height="1" fill="#707070"/><rect x="10" y="11" width="1" height="1" fill="#707070"/><rect x="12" y="11" width="1" height="1" fill="#707070"/></svg>
<span class="t" style="left:46.20px;top:122px;letter-spacing:-0.408px;">Simulink Root</span>
<span class="t" style="left:66.20px;top:138px;letter-spacing:-0.123px;">Base Workspace</span>
<span class="t" style="left:66.20px;top:154px;letter-spacing:-0.307px;">kupplungsmodell*</span>
<span class="t" style="left:86.20px;top:170px;letter-spacing:-0.200px;">Model Workspace</span>
<span class="t" style="left:86.20px;top:186px;letter-spacing:-0.248px;">Code for kupplungsmodell</span>
<span class="t" style="left:87.20px;top:202px;letter-spacing:-0.308px;">Advice for kupplungsmodell</span>
<span class="t" style="left:86.20px;top:218px;letter-spacing:-0.090px;">Configuration (Active)</span>
<span class="t" style="left:86.20px;top:234px;letter-spacing:-0.311px;">Subsystem1</span>
<span class="t" style="left:86.20px;top:250px;letter-spacing:-0.140px;">switch</span>
</div></body></html>
